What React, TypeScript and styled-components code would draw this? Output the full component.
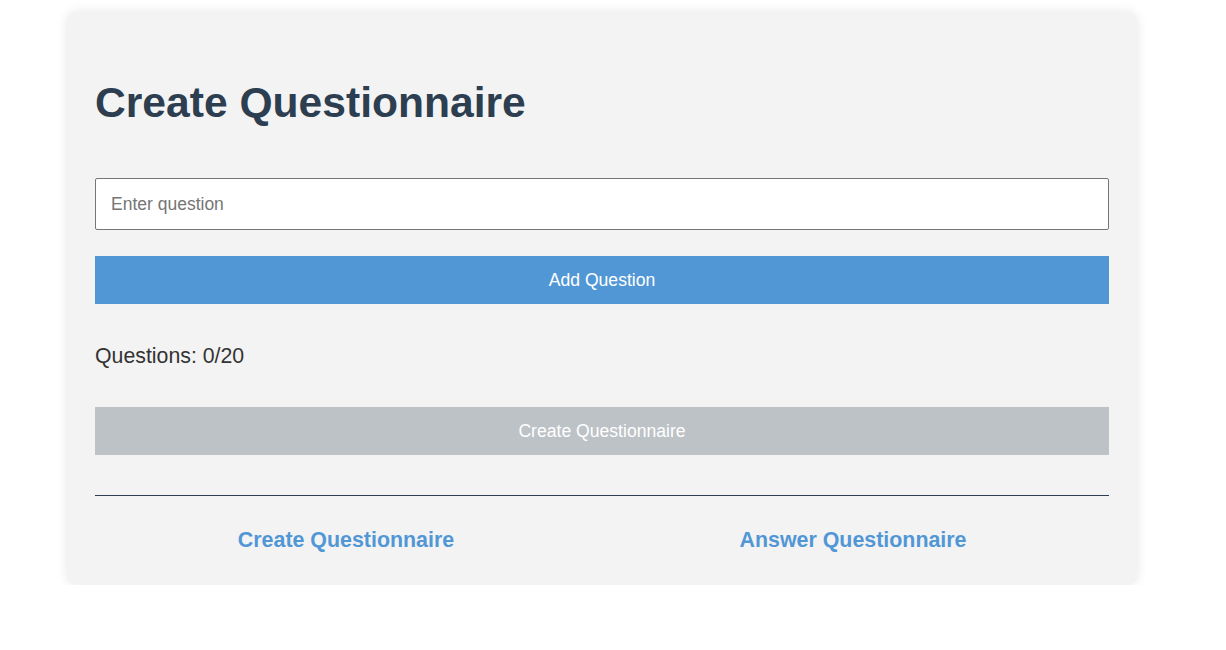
import React, { useState } from "react";
import styled, { createGlobalStyle } from "styled-components";

const GlobalStyle = createGlobalStyle`
  html, body {
    margin: 0;
    padding: 0;
    background: #ffffff;
    font-family: "Liberation Sans", Arial, Helvetica, sans-serif;
  }
  * { box-sizing: border-box; }
`;

const Page = styled.div`
  padding: 12px 0 0 67px;
`;

const Card = styled.div`
  width: 1070px;
  padding: 28px 28px 28px;
  background: #f3f3f3;
  border-radius: 10px;
  box-shadow: 0 0 12px rgba(0, 0, 0, 0.1);
  display: flex;
  flex-direction: column;
`;

const Title = styled.h1`
  margin: 38px 0 0;
  font-size: 42.6px;
  line-height: 49px;
  font-weight: 700;
  color: #2c3e50;
`;

const Input = styled.input`
  margin-top: 51px;
  width: 100%;
  height: 52px;
  padding: 0 15px;
  border: 1px solid #767676;
  border-radius: 2px;
  background: #ffffff;
  font-family: inherit;
  font-size: 17.5px;
  color: #333;
  outline: none;
  &::placeholder {
    color: #757575;
  }
`;

const Button = styled.button<{ $variant: "primary" | "disabled"; $gap: number }>`
  margin-top: ${(p) => p.$gap}px;
  width: 100%;
  height: 48px;
  border: none;
  border-radius: 0;
  background: ${(p) => (p.$variant === "primary" ? "#5197d6" : "#bdc2c6")};
  color: #ffffff;
  font-family: inherit;
  font-size: 17.6px;
  cursor: ${(p) => (p.$variant === "primary" ? "pointer" : "default")};
`;

const Count = styled.p`
  margin: 40px 0 0;
  font-size: 21.3px;
  line-height: 24px;
  color: #333333;
`;

const Divider = styled.hr`
  margin: 40px 0 0;
  border: none;
  border-top: 1px solid #2c3e50;
  height: 0;
`;

const Nav = styled.nav`
  margin-top: 32px;
  margin-bottom: 5px;
  display: grid;
  grid-template-columns: 1fr 1fr;
`;

const NavLink = styled.a`
  justify-self: center;
  font-size: 21.4px;
  line-height: 24px;
  font-weight: 700;
  color: #5197d6;
  text-decoration: none;
  margin-left: -5px;
  cursor: pointer;
`;

export default function App() {
  const [question, setQuestion] = useState("");
  const [questions, setQuestions] = useState<string[]>([]);

  const add = () => {
    if (question.trim() && questions.length < 20) {
      setQuestions([...questions, question.trim()]);
      setQuestion("");
    }
  };

  return (
    <>
      <GlobalStyle />
      <Page>
        <Card>
          <Title>Create Questionnaire</Title>
          <Input
            placeholder="Enter question"
            value={question}
            onChange={(e) => setQuestion(e.target.value)}
          />
          <Button $variant="primary" $gap={26} onClick={add}>
            Add Question
          </Button>
          <Count>Questions: {questions.length}/20</Count>
          <Button $variant="disabled" $gap={39} disabled={questions.length === 0}>
            Create Questionnaire
          </Button>
          <Divider />
          <Nav>
            <NavLink>Create Questionnaire</NavLink>
            <NavLink>Answer Questionnaire</NavLink>
          </Nav>
        </Card>
      </Page>
    </>
  );
}
